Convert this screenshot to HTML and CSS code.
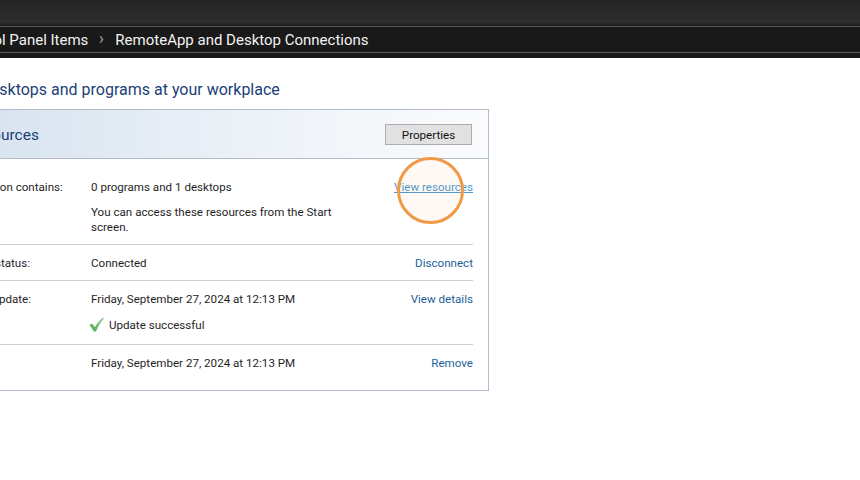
FILE: index.html
```html
<!DOCTYPE html>
<html>
<head>
<meta charset="utf-8">
<title>RemoteApp and Desktop Connections</title>
<link rel="stylesheet" href="styles.css">
</head>
<body>
<div class="topbar"></div>
<div class="crumbs">
	<span class="crumb">Control Panel Items</span>
	<svg class="chevron" width="5" height="7" viewBox="0 0 5 7"><path d="M0.5 0 L2 0 L4.5 3.5 L2 7 L0.5 7 L2.5 3.5 Z" fill="#8a8a8a"/></svg>
	<span class="crumb">RemoteApp and Desktop Connections</span>
</div>
<div class="crumbs-end"></div>

<div class="main">
	<h1 class="heading">Access RemoteApp desktops and programs at your workplace</h1>
	<div class="card">
		<div class="card-head">
			<h2 class="card-title">Work Resources</h2>
			<button class="btn">Properties</button>
		</div>
		<div class="card-body">
			<div class="row row-first">
				<div class="label">Connection contains:</div>
				<div class="value">
					<p>0 programs and 1 desktops</p>
					<p class="note">You can access these resources from the Start screen.</p>
				</div>
				<a class="link link-hover">View resources</a>
			</div>
			<div class="row row-status">
				<div class="label">Current status:</div>
				<div class="value"><p>Connected</p></div>
				<a class="link">Disconnect</a>
			</div>
			<div class="row row-update">
				<div class="label">Recent update:</div>
				<div class="value">
					<p>Friday, September 27, 2024 at 12:13 PM</p>
					<p class="success">
						<svg class="check" width="15" height="15" viewBox="0 0 15 15"><defs><linearGradient id="checkFill" x1="0" y1="1" x2="1" y2="0"><stop offset="0" stop-color="#4fae55"/><stop offset="1" stop-color="#8fd08a"/></linearGradient></defs><path d="M0.5 8 L3 6.5 L6 10 C8 6.5 10.5 3 14.5 0.5 L15 1.5 C11.5 5 9 9.5 7 14.5 L5 14.5 Z" fill="url(#checkFill)"/></svg>
						Update successful
					</p>
				</div>
				<a class="link">View details</a>
			</div>
			<div class="row row-last">
				<div class="label">Created:</div>
				<div class="value"><p>Friday, September 27, 2024 at 12:13 PM</p></div>
				<a class="link">Remove</a>
			</div>
		</div>
	</div>
</div>
<div class="click-mark"></div>
</body>
</html>
```

FILE: styles.css
```css
*{ margin:0; padding:0; box-sizing:border-box;}
html,body{ height:100%; overflow:hidden;}
body{ background:#fff; font-family:Roboto,"Noto Sans",sans-serif; font-size:11.6px; line-height:16px; color:#1f1f1f; position:relative;}
.topbar{ height:27px; background:linear-gradient(#252525,#2d2d2d 85%,#1c1c1c); border-bottom:1px solid #555;}
.crumbs{ height:26px; margin-left:-43px; background:#191919; border-bottom:1px solid #5a5a5a; display:flex; align-items:center; gap:11px; color:#f2f2f2; font-size:15px; white-space:nowrap;}
.crumbs-end{ height:5px; background:#191919;}
.main{ margin-left:-125px; width:614px; padding-top:21px;}
.heading{ font-size:16px; line-height:22px; font-weight:normal; color:#1c3f77; white-space:nowrap; margin-bottom:8px; margin-left:-37px;}
.card{ border:1px solid #b4bccb;}
.card-head{ height:49px; display:flex; align-items:center; justify-content:space-between; padding:1px 16px 0 51px; background:linear-gradient(90deg,#d9e4f0 20%,#f2f6fa 75%,#fafbfd); border-bottom:1px solid #b4bccb;}
.card-title{ font-size:15.5px; font-weight:normal; color:#1c3f77;}
.btn{ width:87px; height:21px; background:#e1e1e1; border:1px solid #adadad; font:inherit; color:#111;}
.card-body{ padding:0 15px 0 78px;}
.row{ display:flex; align-items:flex-start; padding:10px 0; border-bottom:1px solid #d0d0d0;}
.row-first{ padding:20px 0 9px;}
.row-status{ padding-bottom:9px;}
.row-update{ padding-bottom:11px;}
.row-last{ border-bottom:none; padding-bottom:19px;}
.label{ width:137px; flex:none; white-space:nowrap;}
.value{ flex:1; max-width:245px; white-space:normal;}
.value p{ white-space:nowrap;}
.value p.note{ white-space:normal; margin-top:10px; line-height:15px;}
.success{ display:flex; align-items:center; gap:5px; margin-top:10px; margin-left:-2px;}
.check{ margin-top:-2px;}
.link{ margin-left:auto; color:#1c5f99; white-space:nowrap;}
.link-hover{ color:#4a9ad0; text-decoration:underline;}
.click-mark{ position:absolute; left:397px; top:157px; width:67px; height:67px; border:3px solid #f09a45; border-radius:50%; background:rgba(242,154,60,.06);}
```
